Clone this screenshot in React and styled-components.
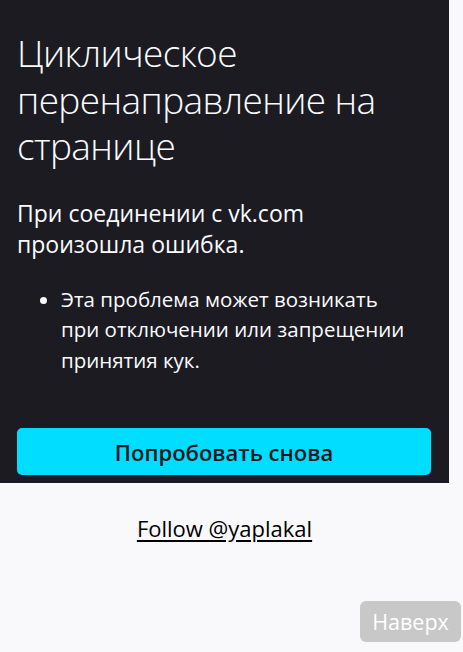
import React from 'react';
import styled, {createGlobalStyle} from 'styled-components';

const GlobalStyle = createGlobalStyle`
html, body {
margin:0;
padding:0;
background:#f9f9fb;
font-family:'Open Sans', 'Noto Sans', sans-serif;
}
`

const Page = styled.div`
display:flex;
flex-direction:column;
width:449px;
min-height:652px;
`

const ErrorPanel = styled.div`
background:#1c1b22;
color:#fbfbfe;
padding:30px 18px 8px 17px;
`

const Title = styled.h1`
margin:0 0 28px;
font-weight:300;
font-size:37px;
line-height:46.5px;
letter-spacing:-0.6px;
`

const Lead = styled.p`
margin:0 0 24px;
font-size:23px;
line-height:31px;
`

const Hints = styled.ul`
margin:0 11px 0 0;
padding-left:44px;
font-size:20.5px;
line-height:30.5px;
`

const RetryButton = styled.button`
display:block;
width:100%;
height:47px;
margin-top:53px;
border:none;
border-radius:5px;
background:#00ddff;
color:#15141a;
font-family:inherit;
font-size:22px;
font-weight:600;
cursor:pointer;
`

const Footer = styled.div`
display:flex;
justify-content:center;
padding-top:30px;
`

const FollowLink = styled.a`
color:#000;
font-size:22px;
text-decoration:underline;
text-underline-offset:3px;
`

// floating "back to top" button, pinned to the bottom right corner
const TopButton = styled.button`
position:fixed;
right:2px;
bottom:10px;
width:101px;
height:41px;
border:none;
border-radius:6px;
background:#c8c8c8;
color:#fff;
font-family:inherit;
font-size:21.5px;
`

export default function App() {
    return (
        <Page>
            <GlobalStyle/>
            <ErrorPanel>
                <Title>Циклическое перенаправление на странице</Title>
                <Lead>При соединении с vk.com произошла ошибка.</Lead>
                <Hints>
                    <li>Эта проблема может возникать при отключении или запрещении принятия кук.</li>
                </Hints>
                <RetryButton>Попробовать снова</RetryButton>
            </ErrorPanel>
            <Footer>
                <FollowLink href="#">Follow @yaplakal</FollowLink>
            </Footer>
            <TopButton>Наверх</TopButton>
        </Page>
    );
}
